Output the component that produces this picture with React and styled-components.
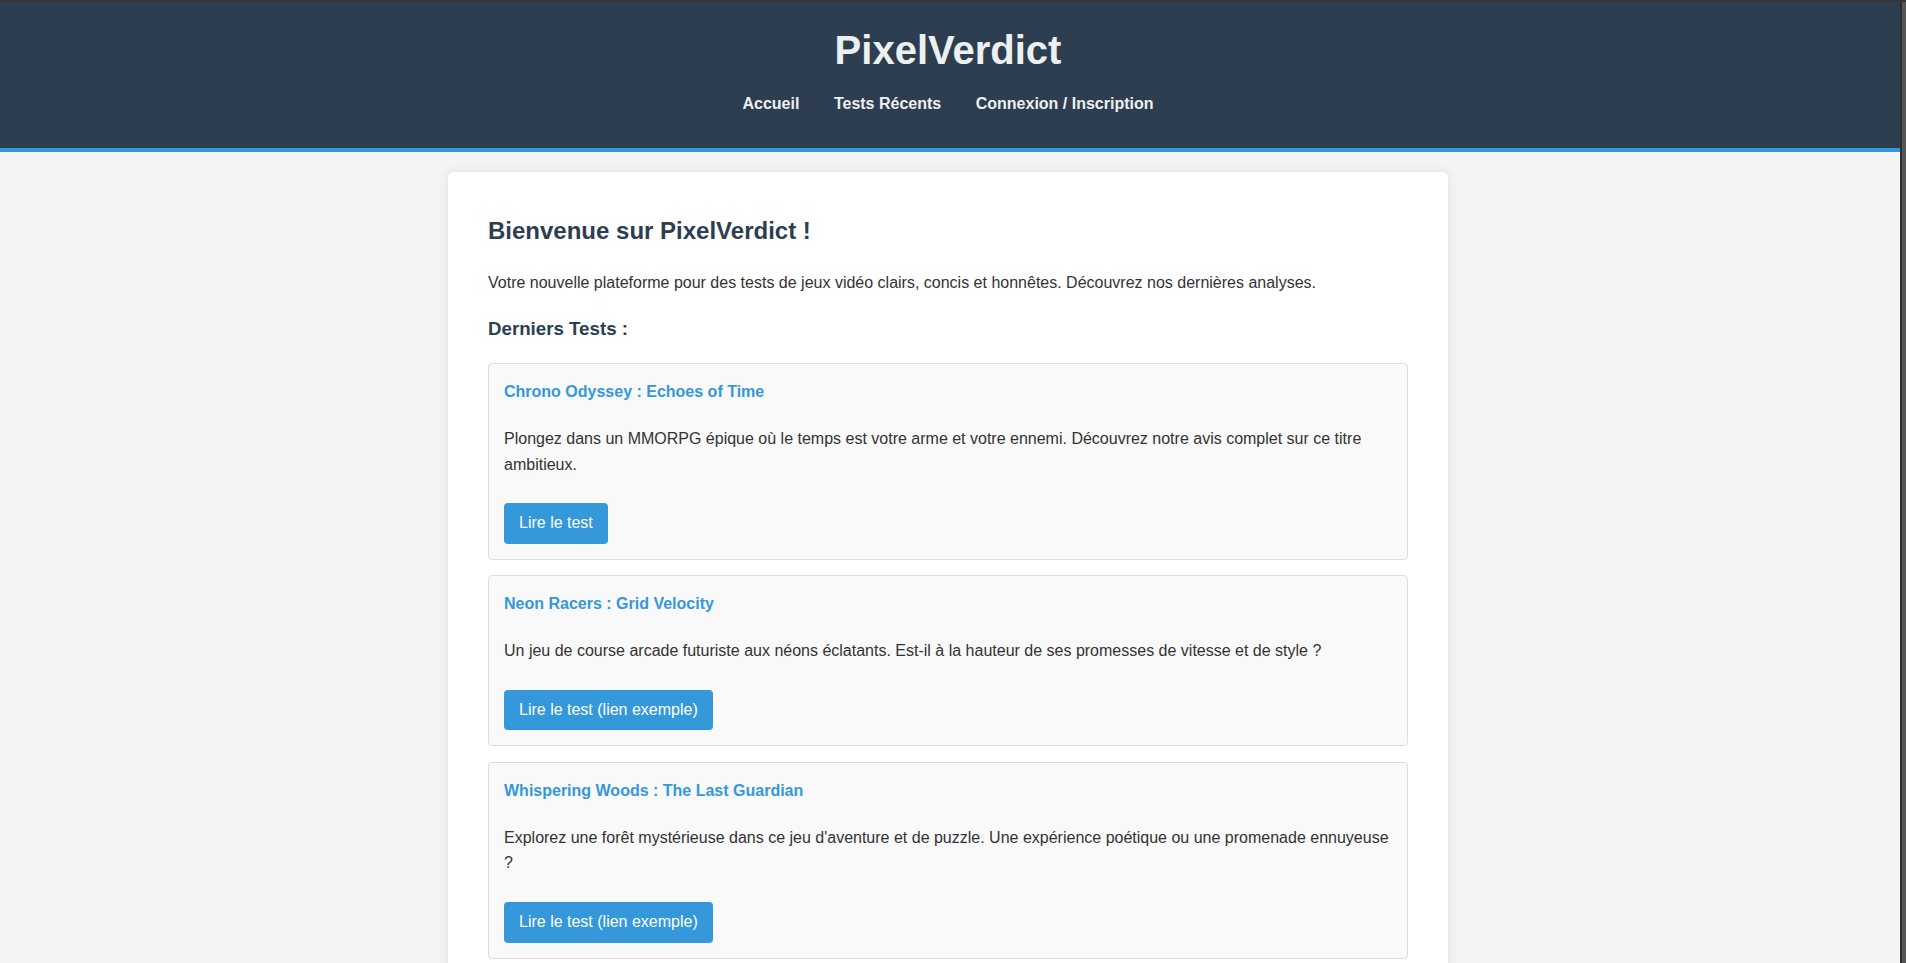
import React from "react";
import styled, { createGlobalStyle } from "styled-components";

const GlobalStyle = createGlobalStyle`
  html, body {
    margin: 0;
    padding: 0;
    height: 100%;
    overflow: hidden;
  }
  body {
    font-family: "Liberation Sans", Arial, Helvetica, sans-serif;
    font-size: 16px;
    line-height: 1.6;
    color: #333;
    background: #f4f4f4;
  }
  * { box-sizing: border-box; }
`;

const Frame = styled.div`
  height: 100vh;
  display: flex;
  flex-direction: column;
  border-top: 2px solid #363636;
  background: #363636;
`;

const Window = styled.div`
  flex: 1;
  display: flex;
  min-height: 0;
`;

const Page = styled.div`
  flex: 1;
  min-width: 0;
  overflow: hidden;
  background: #f4f4f4;
`;

const EdgeStrip = styled.div`
  width: 6px;
  display: flex;
`;

const EdgeDark = styled.div`
  width: 2px;
  background: #2f2f2f;
`;

const EdgeLight = styled.div`
  flex: 1;
  background: #575757;
`;

const Header = styled.header`
  background: #2c3e50;
  color: #ecf0f1;
  border-bottom: 4px solid #3498db;
  padding: 16px 4px 31px 0;
  text-align: center;
`;

const SiteTitle = styled.h1`
  margin: 0;
  font-size: 40px;
  line-height: 64px;
  font-weight: 700;
  color: #ecf0f1;
`;

const Nav = styled.nav`
  margin-top: 9px;
  display: flex;
  justify-content: center;
  gap: 34.5px;
`;

const NavLink = styled.a`
  color: #ecf0f1;
  font-weight: 700;
  font-size: 16px;
  line-height: 25.6px;
  text-decoration: none;
`;

const Main = styled.main`
  padding: 20px 4px 0 0;
  display: flex;
  justify-content: center;
`;

const Card = styled.section`
  width: 1000px;
  background: #fff;
  border-radius: 5px;
  box-shadow: 0 0 10px rgba(0, 0, 0, 0.1);
  padding: 40px;
`;

const PageHeading = styled.h2`
  margin: 0 0 19.7px;
  font-size: 24px;
  line-height: 38.4px;
  color: #2c3e50;
  font-weight: 700;
`;

const Intro = styled.p`
  margin: 0 0 18.5px;
  line-height: 25.6px;
`;

const SectionHeading = styled.h3`
  margin: 0 0 19.5px;
  font-size: 18.72px;
  line-height: 29.95px;
  color: #2c3e50;
  font-weight: 700;
`;

const ReviewList = styled.div`
  display: flex;
  flex-direction: column;
  gap: 15.5px;
`;

const Review = styled.article`
  background: #f9f9f9;
  border: 1px solid #ddd;
  border-radius: 4px;
  padding: 15px;
`;

const ReviewTitle = styled.h4`
  margin: 0 0 21.2px;
  font-size: 16px;
  line-height: 25.6px;
  font-weight: 700;
  color: #3498db;
`;

const ReviewText = styled.p`
  margin: 0 0 26px;
  line-height: 25.6px;
`;

const ReadButton = styled.a`
  display: inline-block;
  vertical-align: top;
  background: #3498db;
  color: #fff;
  text-decoration: none;
  border-radius: 4px;
  padding: 8px 15px;
  line-height: 24.7px;
  font-size: 16px;
`;

const reviews = [
  {
    title: "Chrono Odyssey : Echoes of Time",
    text:
      "Plongez dans un MMORPG épique où le temps est votre arme et votre ennemi. Découvrez notre avis complet sur ce titre ambitieux.",
    cta: "Lire le test",
  },
  {
    title: "Neon Racers : Grid Velocity",
    text:
      "Un jeu de course arcade futuriste aux néons éclatants. Est-il à la hauteur de ses promesses de vitesse et de style ?",
    cta: "Lire le test (lien exemple)",
  },
  {
    title: "Whispering Woods : The Last Guardian",
    text:
      "Explorez une forêt mystérieuse dans ce jeu d'aventure et de puzzle. Une expérience poétique ou une promenade ennuyeuse ?",
    cta: "Lire le test (lien exemple)",
  },
];

export default function App() {
  return (
    <>
      <GlobalStyle />
      <Frame>
        <Window>
          <Page>
            <Header>
              <SiteTitle>PixelVerdict</SiteTitle>
              <Nav>
                <NavLink href="#">Accueil</NavLink>
                <NavLink href="#">Tests Récents</NavLink>
                <NavLink href="#">Connexion / Inscription</NavLink>
              </Nav>
            </Header>
            <Main>
              <Card>
                <PageHeading>Bienvenue sur PixelVerdict !</PageHeading>
                <Intro>
                  Votre nouvelle plateforme pour des tests de jeux vidéo clairs,
                  concis et honnêtes. Découvrez nos dernières analyses.
                </Intro>
                <SectionHeading>Derniers Tests :</SectionHeading>
                <ReviewList>
                  {reviews.map((r) => (
                    <Review key={r.title}>
                      <ReviewTitle>{r.title}</ReviewTitle>
                      <ReviewText>{r.text}</ReviewText>
                      <ReadButton href="#">{r.cta}</ReadButton>
                    </Review>
                  ))}
                </ReviewList>
              </Card>
            </Main>
          </Page>
          <EdgeStrip>
            <EdgeDark />
            <EdgeLight />
          </EdgeStrip>
        </Window>
      </Frame>
    </>
  );
}
